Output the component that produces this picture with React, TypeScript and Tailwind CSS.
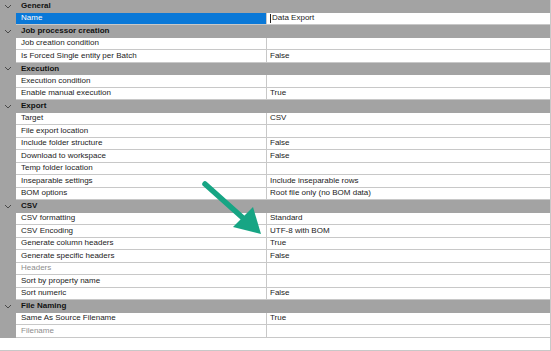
import React from 'react';

type Row =
  | { kind: 'cat'; label: string }
  | { kind: 'prop'; label: string; value?: string; disabled?: boolean; selected?: boolean };

const rows: Row[] = [
  { kind: 'cat', label: 'General' },
  { kind: 'prop', label: 'Name', value: 'Data Export', selected: true },
  { kind: 'cat', label: 'Job processor creation' },
  { kind: 'prop', label: 'Job creation condition' },
  { kind: 'prop', label: 'Is Forced Single entity per Batch', value: 'False' },
  { kind: 'cat', label: 'Execution' },
  { kind: 'prop', label: 'Execution condition' },
  { kind: 'prop', label: 'Enable manual execution', value: 'True' },
  { kind: 'cat', label: 'Export' },
  { kind: 'prop', label: 'Target', value: 'CSV' },
  { kind: 'prop', label: 'File export location' },
  { kind: 'prop', label: 'Include folder structure', value: 'False' },
  { kind: 'prop', label: 'Download to workspace', value: 'False' },
  { kind: 'prop', label: 'Temp folder location' },
  { kind: 'prop', label: 'Inseparable settings', value: 'Include inseparable rows' },
  { kind: 'prop', label: 'BOM options', value: 'Root file only (no BOM data)' },
  { kind: 'cat', label: 'CSV' },
  { kind: 'prop', label: 'CSV formatting', value: 'Standard' },
  { kind: 'prop', label: 'CSV Encoding', value: 'UTF-8 with BOM' },
  { kind: 'prop', label: 'Generate column headers', value: 'True' },
  { kind: 'prop', label: 'Generate specific headers', value: 'False' },
  { kind: 'prop', label: 'Headers', disabled: true },
  { kind: 'prop', label: 'Sort by property name' },
  { kind: 'prop', label: 'Sort numeric', value: 'False' },
  { kind: 'cat', label: 'File Naming' },
  { kind: 'prop', label: 'Same As Source Filename', value: 'True' },
  { kind: 'prop', label: 'Filename', disabled: true },
];

const Chevron = () => (
  <svg width="8" height="5" viewBox="0 0 8 5" className="shrink-0">
    <path d="M1 1 L4 4 L7 1" fill="none" stroke="#4a4a4a" strokeWidth="1" />
  </svg>
);

export default function App() {
  return (
    <div
      className="relative w-[551px] h-[351px] bg-white border-r border-b border-[#c8c8c8] overflow-hidden text-[#1b1b1b]"
      style={{ fontFamily: '"Liberation Sans", Arial, sans-serif' }}
    >
      {rows.map((row, i) =>
        row.kind === 'cat' ? (
          <div key={i} className="flex items-center h-[12.5px] bg-[#a3a3a3]">
            <div className="w-[16px] flex justify-center">
              <Chevron />
            </div>
            <span className="pl-[5px] text-[8px] font-bold leading-none text-[#111]">{row.label}</span>
          </div>
        ) : (
          <div key={i} className="flex h-[12.5px]">
            <div className="w-[16px] shrink-0 bg-[#a3a3a3]" />
            <div
              className={`w-[251px] shrink-0 flex items-center pl-[5px] border-b border-r border-[#c8c8c8] text-[8px] leading-none ${
                row.selected ? 'bg-[#0a78d7] text-white' : row.disabled ? 'text-[#8e8e8e]' : ''
              }`}
            >
              {row.label}
            </div>
            <div className="flex-1 flex items-center pl-[3px] border-b border-[#c8c8c8] text-[8px] leading-none">
              {row.selected && <span className="w-px h-[9px] bg-[#222] mr-px" />}
              {row.value}
            </div>
          </div>
        )
      )}

      {/* callout arrow */}
      <svg className="absolute left-0 top-0 pointer-events-none" width="551" height="351">
        <line x1="205" y1="184" x2="243" y2="218" stroke="#17a584" strokeWidth="5.5" strokeLinecap="round" />
        <polygon points="261,234 233,227 253,207" fill="#17a584" />
      </svg>
    </div>
  );
}
